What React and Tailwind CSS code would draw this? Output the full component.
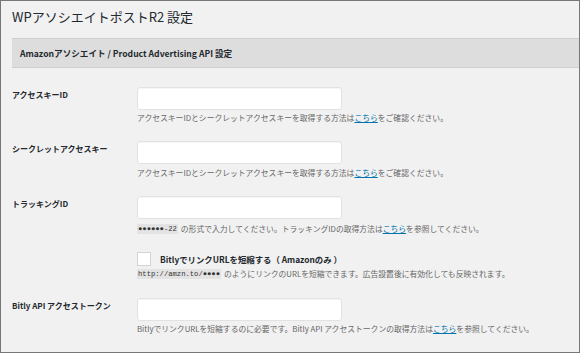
const font = { fontFamily: '"Noto Sans CJK JP", "Noto Sans", sans-serif' }

function Field() {
  return <div className="h-[23px] w-[205px] rounded-[3px] border border-[#e2e2e2] bg-white shadow-[inset_0_1px_1px_rgba(0,0,0,0.04)]" />
}

function Link({ children }) {
  return <span className="text-[#0073aa] underline">{children}</span>
}

function Code({ children }) {
  return (
    <span className="mr-[3px] inline-block bg-[#e3e3e3] px-[1px] text-[7.2px] leading-[10px] text-[#333] [font-family:'Liberation_Mono',monospace]">
      {children}
    </span>
  )
}

function Row({ label, children, className = '' }) {
  return (
    <div className={`flex ${className}`}>
      <div className="w-[125px] shrink-0 pt-[2px] text-[8px] font-bold leading-[12px] text-[#23282d]">{label}</div>
      <div className="flex flex-col">{children}</div>
    </div>
  )
}

export default function App() {
  return (
    <div style={font} className="h-[353px] w-[580px] overflow-hidden border border-[#777] bg-[#f1f1f1] pl-[11px]">
      <h1 className="mt-[7px] text-[13px] leading-[18px] text-[#23282d]">WPアソシエイトポストR2 設定</h1>

      <div className="mt-[12px] flex h-[30px] items-center border-y border-[#cfcfcf] bg-[#dddddd] pl-[8px]">
        <span className="text-[8.6px] font-bold text-[#23282d]">Amazonアソシエイト / Product Advertising API 設定</span>
      </div>

      <Row label="アクセスキーID" className="mt-[19px]">
        <Field />
        <p className="mt-[2px] text-[7.8px] leading-[12px] text-[#666]">
          アクセスキーIDとシークレットアクセスキーを取得する方法は<Link>こちら</Link>をご確認ください。
        </p>
      </Row>

      <Row label="シークレットアクセスキー" className="mt-[17px]">
        <Field />
        <p className="mt-[3px] text-[7.8px] leading-[12px] text-[#666]">
          アクセスキーIDとシークレットアクセスキーを取得する方法は<Link>こちら</Link>をご確認ください。
        </p>
      </Row>

      <Row label="トラッキングID" className="mt-[17px]">
        <Field />
        <p className="mt-[4px] flex items-center text-[7.8px] leading-[12px] text-[#666]">
          <Code>●●●●●●-22</Code>
          <span>の形式で入力してください。トラッキングIDの取得方法は<Link>こちら</Link>を参照してください。</span>
        </p>
        <div className="mt-[17px] flex items-center">
          <div className="h-[14px] w-[14px] border border-[#d4d4d4] bg-white" />
          <span className="ml-[9px] text-[8.4px] font-bold text-[#23282d]">BitlyでリンクURLを短縮する（ Amazonのみ ）</span>
        </div>
        <p className="mt-[2px] flex items-center text-[7.8px] leading-[12px] text-[#666]">
          <Code>http://amzn.to/●●●●</Code>
          <span>のようにリンクのURLを短縮できます。広告設置後に有効化しても反映されます。</span>
        </p>
      </Row>

      <Row label="Bitly API アクセストークン" className="mt-[18px]">
        <Field />
        <p className="mt-[2px] text-[7.8px] leading-[12px] text-[#666]">
          BitlyでリンクURLを短縮するのに必要です。Bitly API アクセストークンの取得方法は<Link>こちら</Link>を参照してください。
        </p>
      </Row>
    </div>
  )
}
